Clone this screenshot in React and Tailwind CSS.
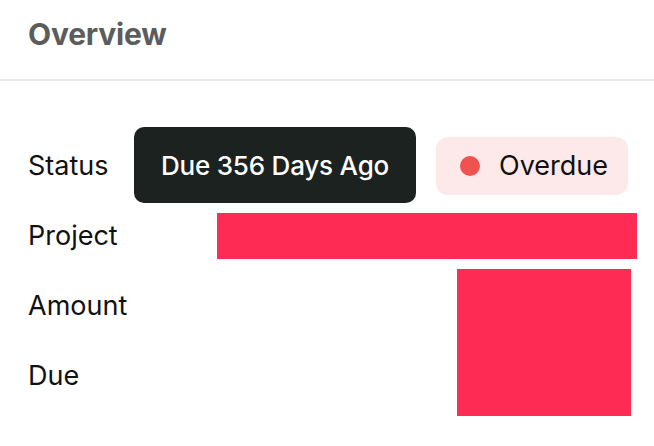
export default function App() {
  const rows = ['Status', 'Project', 'Amount', 'Due'];

  return (
    <div className="relative w-[654px] h-[446px] bg-white overflow-hidden font-['Inter',sans-serif]">
      <div className="h-[81px] border-b-2 border-[#ebebeb] px-[28px] pt-[12px]">
        <h1 className="text-[30px] font-bold text-[#5c5c5c] tracking-[-0.2px]">Overview</h1>
      </div>

      <div className="pt-[50px] pl-[28px] pr-[17px]">
        {rows.map((label) => (
          <div key={label} className="h-[70px] flex items-center">
            <span className="w-[160px] text-[27px] text-[#111111]">{label}</span>
            <div className="flex-1 flex justify-end">
              {label === 'Status' && (
                <div className="mr-[9px] h-[58px] w-[192px] rounded-[12px] bg-[#fde9e9] flex items-center pl-[24px] gap-[19px]">
                  <span className="w-[20px] h-[20px] rounded-full bg-[#ef5350]" />
                  <span className="text-[27px] text-[#111111]">Overdue</span>
                </div>
              )}
              {label === 'Project' && (
                <div className="h-[46px] w-[420px] bg-[#fe2b55]" />
              )}
            </div>
          </div>
        ))}
      </div>

      <div className="absolute left-[457px] top-[269px] w-[174px] h-[147px] bg-[#fe2b55]" />

      <div className="absolute left-[134px] top-[127px] w-[282px] h-[76px] rounded-[10px] bg-[#1b2220] flex items-center justify-center">
        <span className="text-[26px] font-medium text-white tracking-[-0.2px]">Due 356 Days Ago</span>
      </div>
    </div>
  );
}
